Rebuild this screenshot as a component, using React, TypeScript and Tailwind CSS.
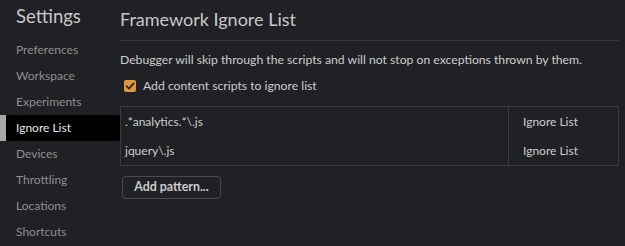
const navItems = [
	"Preferences",
	"Workspace",
	"Experiments",
	"Ignore List",
	"Devices",
	"Throttling",
	"Locations",
	"Shortcuts",
];

const patterns = [".*analytics.*\\.js", "jquery\\.js"];

function CheckIcon() {
	return (
		<svg width="10" height="10" viewBox="0 0 10 10" fill="none">
			<path d="M1.5 5.2 L4 7.6 L8.6 2.4" stroke="#2a2a2a" strokeWidth="1.8" strokeLinecap="round" strokeLinejoin="round" />
		</svg>
	);
}

export default function App() {
	const active = "Ignore List";

	return (
		<div className="flex h-[246px] w-[625px] overflow-hidden bg-[#202124] font-['Lato','Noto_Sans',sans-serif] text-[#cdcdcd]">
			<aside className="w-[120px] shrink-0">
				<h1 className="flex h-[37px] items-center pl-4 pb-[3px] text-[18.5px] text-[#c8c8c8]">Settings</h1>
				<nav className="flex flex-col">
					{navItems.map((item) =>
						item === active ? (
							<div key={item} className="flex h-[26px] items-center bg-black text-[12px] text-[#e6e6e6]">
								<span className="h-full w-[6px] bg-[#a8a8a8]" />
								<span className="pl-[10px]">{item}</span>
							</div>
						) : (
							<div key={item} className="flex h-[26px] items-center pl-4 text-[12px] text-[#8e8e8e]">
								{item}
							</div>
						)
					)}
				</nav>
			</aside>
			<main className="flex-1 pr-[6px]">
				<header className="flex h-[41px] items-center border-b border-[#37373a] pb-[2px] text-[18px] text-[#c8c8c8]">
					Framework Ignore List
				</header>
				<p className="mt-[11px] h-4 text-[12.2px] leading-4">
					Debugger will skip through the scripts and will not stop on exceptions thrown by them.
				</p>
				<label className="mt-[10px] flex h-4 items-center gap-[7px] pl-1 text-[12.2px]">
					<span className="flex h-[12px] w-[12px] items-center justify-center rounded-[2px] bg-[#e3973a]">
						<CheckIcon />
					</span>
					Add content scripts to ignore list
				</label>
				<div className="mt-[12px] border border-[#3a3a3d]">
					{patterns.map((p) => (
						<div key={p} className="flex h-[29px] items-center text-[12px]">
							<div className="flex-1 pl-[4px]">{p}</div>
							<div className="flex h-full w-[110px] items-center border-l border-[#3a3a3d] pl-[14px]">Ignore List</div>
						</div>
					))}
				</div>
				<button className="mt-[10px] ml-[2px] h-[23px] w-[99px] rounded-[4px] border border-[#4a4a4d] text-[12.4px] font-bold text-[#cccccc]">
					Add pattern...
				</button>
			</main>
		</div>
	);
}
